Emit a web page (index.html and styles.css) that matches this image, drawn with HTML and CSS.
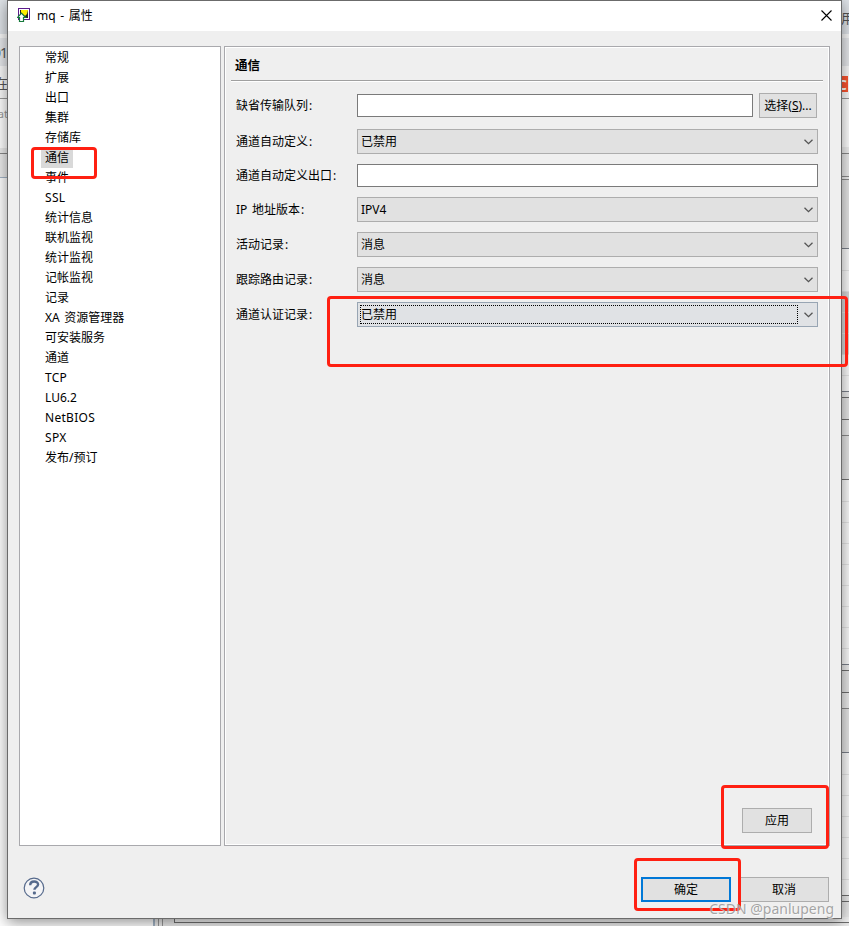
FILE: index.html
```
<!DOCTYPE html>
<html lang="zh-CN">
<head>
    <meta charset="UTF-8">
    <meta name="viewport" content="width=device-width, initial-scale=1.0">
    <title>mq - 属性</title>
    <link rel="stylesheet" href="styles.css">
</head>
<body>
    <div class="desktop">
        <div class="edge edge-left" id="edge-left"></div>
        <div class="edge edge-right" id="edge-right"></div>
        <div class="edge-bottom">
            <div class="sash"></div>
            <div class="view"></div>
        </div>
    </div>

    <div class="dialog">
        <div class="titlebar">
            <svg class="app-icon" width="13" height="14" viewBox="0 0 13 14">
                <rect x="1.5" y=".5" width="11" height="11" fill="#fff" stroke="#5b1a8b"/>
                <rect x="3" y="2" width="8" height="8" fill="#222"/>
                <path d="M4 2h7l-1 4-2 2-4-3z" fill="#ffed00"/>
                <path d="M4.5 5.2l4 4.300h-2v4h-4v-4h-2z" fill="#fff" stroke="#157a3c" stroke-width="1.2"/>
            </svg>
            <span class="caption">mq - 属性</span>
            <svg class="close" width="11" height="11" viewBox="0 0 11 11">
                <path d="M.5.5l10 10M10.5.5l-10 10" stroke="#000" stroke-width="1.1"/>
            </svg>
        </div>

        <div class="content">
            <ul class="tree">
                <li><span>常规</span></li>
                <li><span>扩展</span></li>
                <li><span>出口</span></li>
                <li><span>集群</span></li>
                <li><span>存储库</span></li>
                <li><span class="selected">通信</span></li>
                <li><span>事件</span></li>
                <li><span class="latin">SSL</span></li>
                <li><span>统计信息</span></li>
                <li><span>联机监视</span></li>
                <li><span>统计监视</span></li>
                <li><span>记帐监视</span></li>
                <li><span>记录</span></li>
                <li><span>XA 资源管理器</span></li>
                <li><span>可安装服务</span></li>
                <li><span>通道</span></li>
                <li><span class="latin">TCP</span></li>
                <li><span>LU6.2</span></li>
                <li><span class="latin">NetBIOS</span></li>
                <li><span class="latin">SPX</span></li>
                <li><span>发布/预订</span></li>
            </ul>

            <div class="page">
                <h1>通信</h1>
                <div class="form">
                    <div class="row first">
                        <label>缺省传输队列<i>:</i></label>
                        <div class="input"></div>
                        <button class="btn choose">选择(<u>S</u>)...</button>
                    </div>
                    <div class="row">
                        <label>通道自动定义<i>:</i></label>
                        <div class="combo"><span>已禁用</span><svg width="9" height="6" viewBox="0 0 9 6"><path d="M.5.7l4 4 4-4"/></svg></div>
                    </div>
                    <div class="row">
                        <label>通道自动定义出口<i>:</i></label>
                        <div class="input"></div>
                    </div>
                    <div class="row">
                        <label>IP 地址版本<i>:</i></label>
                        <div class="combo"><span>IPV4</span><svg width="9" height="6" viewBox="0 0 9 6"><path d="M.5.7l4 4 4-4"/></svg></div>
                    </div>
                    <div class="row">
                        <label>活动记录<i>:</i></label>
                        <div class="combo"><span>消息</span><svg width="9" height="6" viewBox="0 0 9 6"><path d="M.5.7l4 4 4-4"/></svg></div>
                    </div>
                    <div class="row">
                        <label>跟踪路由记录<i>:</i></label>
                        <div class="combo"><span>消息</span><svg width="9" height="6" viewBox="0 0 9 6"><path d="M.5.7l4 4 4-4"/></svg></div>
                    </div>
                    <div class="row">
                        <label>通道认证记录<i>:</i></label>
                        <div class="combo focused"><span>已禁用</span><svg width="9" height="6" viewBox="0 0 9 6"><path d="M.5.7l4 4 4-4"/></svg></div>
                    </div>
                </div>
                <button class="btn apply">应用</button>
            </div>
        </div>

        <div class="footer">
            <svg class="help" width="22" height="22" viewBox="0 0 22 22">
                <circle cx="11" cy="11" r="9.8" fill="#f4f4f6" stroke="#566a8c" stroke-width="1.2"/>
                <path d="M7.2 8.2c0-5 7.9-4.600 7.900-.7 0 2.500-3.700 2.700-3.700 5.200" fill="none" stroke="#566a8c" stroke-width="2.4"/>
                <rect x="9.9" y="14.6" width="3" height="3" rx="1" fill="#566a8c"/>
            </svg>
            <button class="btn ok">确定</button>
            <button class="btn cancel">取消</button>
        </div>
    </div>

    <div class="mark mark-tree"></div>
    <div class="mark mark-combo"></div>
    <div class="mark mark-apply"></div>
    <div class="mark mark-ok"></div>
    <div class="watermark">CSDN @panlupeng</div>

    <script>
        // [height, background, bottom line, text, text class]
        const leftBands = [
            [34, '#dfe3e8'],
            [4, '#f8f8f8'],
            [28, '#e6e8eb', '', '01', 'num'],
            [33, '#fafafa', '#9a9a9a', '在', 'cjk'],
            [49, '#ffffff', '', 'at', 'small'],
            [6, '#ececec', '#888888'],
            [24, '#ececec', '#a3b4c6'],
            [748, '#ffffff']
        ];
        const rightBands = [
            [34, '#dfe3e8', '', '用', 'cjk'],
            [4, '#f8f8f8'],
            [28, '#e6e8eb'],
            [10, '#fafafa'],
            [16, '#fc5531', '', 'C', 'logo'],
            [7, '#fafafa', '#9a9a9a'],
            [48, '#ffffff'],
            [7, '#f0f0f0', '#8c8c8c'],
            [23, '#ececec', '#8c8c8c'],
            [3, '#f0f0f0', '#8c8c8c'],
            [69, '#e6e6e6', '#7b818b'],
            [22, '#fbfbfb', '#e6e6e6'],
            [21, '#fbfbfb', '#e6e6e6'],
            [21, '#d8d8d8', '#e6e6e6'],
            [21, '#d8d8d8', '#e6e6e6'],
            [21, '#d8d8d8', '#e6e6e6'],
            [21, '#fbfbfb', '#e6e6e6'],
            [16, '#fbfbfb', '#7b818b'],
            [6, '#ececec', '#707070'],
            [22, '#e6e6e6', '#707070'],
            [16, '#ececec', '#8c8c8c'],
            [44, '#e6e6e6', '#707070']
        ];
        for (let i = 0; i < 8; i++) rightBands.push([i ? 21 : 22, '#fbfbfb', '#e6e6e6']);
        rightBands.push([16, '#fbfbfb', '#7b818b'], [6, '#ececec', '#707070'], [22, '#e6e6e6', '#707070'],
            [16, '#ececec', '#8c8c8c'], [44, '#e6e6e6', '#7b818b']);
        for (let i = 0; i < 6; i++) rightBands.push([i ? 21 : 22, '#fbfbfb', '#e6e6e6']);
        rightBands.push([16, '#fbfbfb', '#707070'], [6, '#ececec', '#707070'], [24, '#ececec']);

        function fill(id, bands) {
            const edge = document.getElementById(id);
            bands.forEach(([height, color, line, text, cls]) => {
                const band = document.createElement('div');
                band.className = 'band ' + (cls || '');
                band.style.height = height + 'px';
                band.style.backgroundColor = color;
                if (line) band.style.borderBottom = '1px solid ' + line;
                if (text) band.textContent = text;
                edge.appendChild(band);
            });
        }
        fill('edge-left', leftBands);
        fill('edge-right', rightBands);
    </script>
</body>
</html>
```
FILE: styles.css
```
* {
    box-sizing: border-box;
}
body {
    margin: 0;
    width: 849px;
    height: 926px;
    overflow: hidden;
    position: relative;
    background-color: #fff;
    color: #000;
    font-family: "Noto Sans", "Noto Sans CJK SC", sans-serif;
    font-size: 12px;
    word-spacing: 1.5px;
}

/* workbench behind the dialog */
.desktop {
    position: absolute;
    inset: 0;
    display: flex;
    justify-content: space-between;
}
.edge {
    width: 8px;
    height: 926px;
    overflow: hidden;
}
.band {
    overflow: hidden;
    white-space: nowrap;
    display: flex;
    align-items: center;
    color: #555;
}
.edge-left .band {
    justify-content: flex-end;
}
.band.num {
    font-size: 14px;
    letter-spacing: -1px;
    padding-right: 1px;
}
.band.cjk {
    font-size: 13px;
}
.band.small {
    padding-bottom: 20px;
    font-size: 11px;
    color: #999;
}
.edge-right .band.logo {
    color: #fff;
    font-weight: bold;
    font-size: 15px;
    justify-content: flex-end;
    margin-right: 1px;
    padding-right: 1px;
}
.edge-bottom {
    position: absolute;
    left: 0;
    right: 0;
    bottom: 0;
    height: 9px;
    display: flex;
    padding-left: 153px;
}
.sash {
    width: 10px;
    background-color: #ececec;
    border-left: 2px solid #a3b4c6;
    border-right: 1px solid #999;
    box-shadow: inset -3px 0 #ececec, inset -4px 0 #999;
}
.view {
    flex: 1;
    margin-left: 11px;
    height: 6px;
    background-color: #f4f4f4;
    border-left: 1px solid #707070;
    border-bottom: 1px solid #707070;
    box-shadow: -11px 0 #ececec, 0 3px #ececec, -11px 3px #ececec;
}

.dialog {
    position: relative;
    margin-left: 7px;
    width: 835px;
    height: 919px;
    display: flex;
    flex-direction: column;
    background-color: #efefef;
    border: 1px solid #6b6b6b;
    box-shadow: 0 3px 14px rgba(0, 0, 0, 0.45);
}
.titlebar {
    height: 30px;
    display: flex;
    align-items: center;
    padding: 0 10px 2px 9px;
    background-color: #fff;
}
.caption {
    flex: 1;
    margin-left: 7px;
}
.close {
    margin-right: -1px;
}

.content {
    display: flex;
    gap: 3px;
    height: 800px;
    margin: 15px 11px 0 11px;
}
.tree {
    width: 202px;
    margin: 0;
    padding: 1px 0 0 21px;
    list-style: none;
    background-color: #fff;
    border: 1px solid #a9a9ad;
}
.tree li {
    height: 20px;
    line-height: 20px;
}
.tree span {
    display: inline-block;
    height: 20px;
    padding: 0 4px;
}
.tree .selected {
    background-color: #d9d9d9;
}
.tree .latin {
    letter-spacing: 0.3px;
}

.page {
    flex: 1;
    display: flex;
    flex-direction: column;
    padding: 0 5px 12px 5px;
    border: 1px solid #a9a9ad;
    box-shadow: inset 0 0 0 1px #fff;
}
h1 {
    margin: 0 1px;
    padding-left: 4px;
    height: 34px;
    line-height: 37px;
    font-size: 12.5px;
    border-bottom: 1px solid #a0a0a0;
    box-shadow: 0 1px #fff;
}
.form {
    display: flex;
    flex-direction: column;
    gap: 10px;
    padding: 12px 6px 0 6px;
}
.row {
    display: flex;
    align-items: center;
}
.row.first {
    margin-bottom: 1px;
    padding-right: 1px;
}
.row label {
    width: 121px;
    padding-bottom: 2px;
}
.row i {
    font-style: normal;
    margin-left: 1px;
}
.input {
    flex: 1;
    height: 23px;
    background-color: #fff;
    border: 1px solid #7a7a7a;
}
.combo {
    flex: 1;
    height: 25px;
    display: flex;
    align-items: center;
    justify-content: space-between;
    padding: 0 4px 0 2px;
    background-color: #e1e1e1;
    border: 1px solid #adadad;
}
.combo span {
    flex: 1;
    margin-right: 6px;
    height: 19px;
    line-height: 19px;
    padding-left: 1px;
}
.combo path {
    fill: none;
    stroke: #555;
    stroke-width: 1.3;
}
.combo.focused {
    background-color: #e0e2e5;
    border-color: #98a5b3;
}
.combo.focused span {
    outline: 1px dotted #000;
    outline-offset: -1px;
}
.btn {
    height: 25px;
    padding: 0 0 2px 0;
    font: inherit;
    color: #000;
    background-color: #e1e1e1;
    border: 1px solid #adadad;
    border-radius: 0;
}
.choose {
    width: 58px;
    margin-left: 6px;
}
.apply {
    width: 70px;
    margin: auto 12px 0 auto;
}

.footer {
    display: flex;
    align-items: center;
    padding: 31px 12px 0 15px;
}
.ok {
    width: 90px;
    margin: 0 8px 0 auto;
    border: 2px solid #0078d7;
}
.cancel {
    width: 90px;
}
.help {
    margin-top: -3px;
}

/* red highlight boxes */
.mark {
    position: absolute;
    border: 3px solid #ff2012;
    border-radius: 4px;
}
.mark-tree {
    left: 31px;
    top: 147px;
    width: 66px;
    height: 32px;
}
.mark-combo {
    left: 327px;
    top: 296px;
    width: 521px;
    height: 71px;
}
.mark-apply {
    left: 721px;
    top: 785px;
    width: 108px;
    height: 64px;
}
.mark-ok {
    left: 634px;
    top: 858px;
    width: 107px;
    height: 53px;
}
.watermark {
    position: absolute;
    right: 15px;
    bottom: 7px;
    font-size: 14px;
    line-height: 20px;
    word-spacing: 0;
    color: rgba(150, 150, 150, 0.85);
    text-shadow: 1px 1px rgba(255, 255, 255, 0.6);
}
```
